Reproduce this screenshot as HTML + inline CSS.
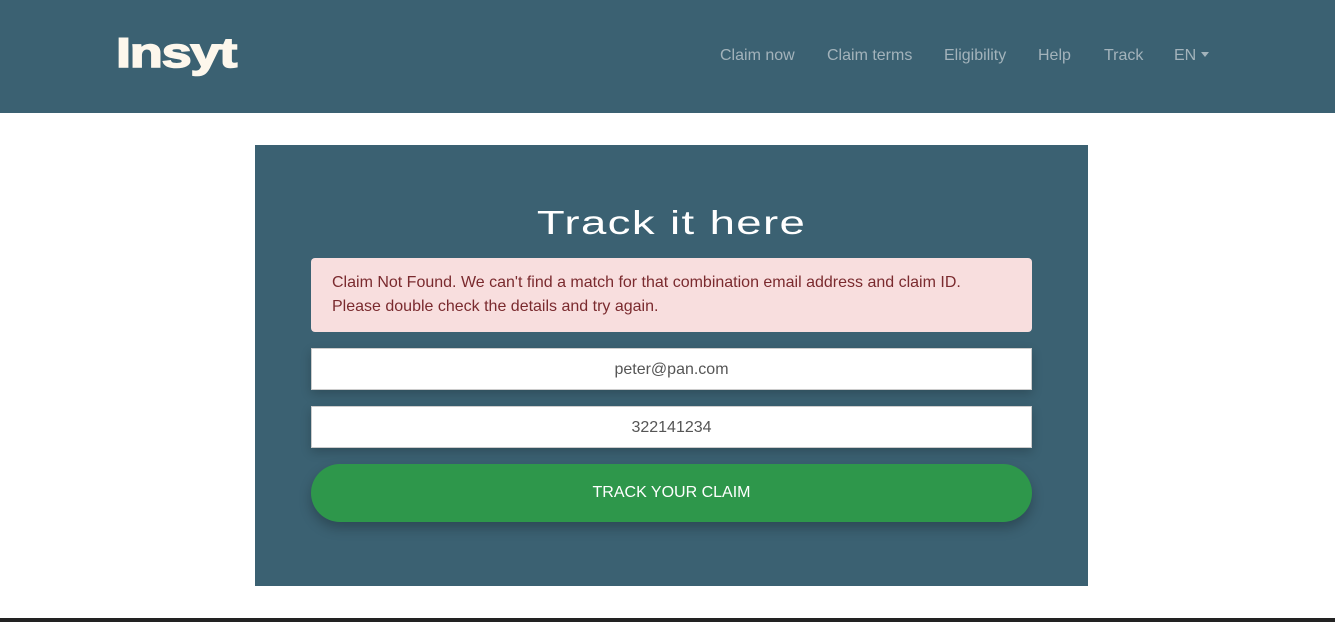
<!DOCTYPE html>
<html><head><style>
*{margin:0;padding:0;box-sizing:border-box}
body{width:1335px;height:622px;background:#fff;font-family:"Liberation Sans",sans-serif;position:relative;overflow:hidden}
.hdr{position:absolute;left:0;top:0;width:1335px;height:113px;background:#3b6172}
.logo{position:absolute;left:116px;top:30px;font-size:42px;font-weight:bold;color:#fdf7ec;letter-spacing:-1px;transform:scaleX(1.29);transform-origin:left;line-height:46px;-webkit-text-stroke:1.5px #fdf7ec}
.nav a{position:absolute;top:47px;font-size:16px;color:#a3b3bb;text-decoration:none;line-height:18px}
.card{position:absolute;left:255px;top:145px;width:833px;height:441px;background:#3b6172}
.title{position:absolute;left:0;width:833px;top:58px;text-align:center;color:#fff;font-size:33px;letter-spacing:1px;line-height:40px}
.title span{display:inline-block;transform:scaleX(1.38)}
.alert{position:absolute;left:56px;top:113px;width:721px;height:74px;background:#f8dede;border-radius:4px;color:#7a2a2e;font-size:16px;line-height:24px;padding:13px 21px 0}
.inp{position:absolute;left:56px;width:721px;height:42px;background:#fff;border:1px solid #ccc;text-align:center;font-size:16px;color:#555;line-height:41px;box-shadow:0 4px 10px rgba(0,0,0,.2)}
.btn{position:absolute;left:56px;top:319px;width:721px;height:58px;background:#2e974b;border-radius:29px;color:#fff;text-align:center;font-size:16px;line-height:58px;box-shadow:0 6px 12px rgba(0,0,0,.25)}
.foot{position:absolute;left:0;top:618px;width:1335px;height:4px;background:#222}
</style></head><body>
<div class="hdr">
<div class="logo">Insyt</div>
<div class="nav">
<a style="left:720px">Claim now</a>
<a style="left:827px">Claim terms</a>
<a style="left:944px">Eligibility</a>
<a style="left:1038px">Help</a>
<a style="left:1104px">Track</a>
<a style="left:1174px">EN <span style="display:inline-block;width:0;height:0;border-left:4px solid transparent;border-right:4px solid transparent;border-top:5px solid #a3b3bb;vertical-align:3px"></span></a>
</div>
</div>
<div class="card">
<div class="title"><span>Track it here</span></div>
<div class="alert">Claim Not Found. We can't find a match for that combination email address and claim ID.<br>Please double check the details and try again.</div>
<div class="inp" style="top:203px">peter@pan.com</div>
<div class="inp" style="top:261px">322141234</div>
<div class="btn">TRACK YOUR CLAIM</div>
</div>
<div class="foot"></div>
</body></html>
